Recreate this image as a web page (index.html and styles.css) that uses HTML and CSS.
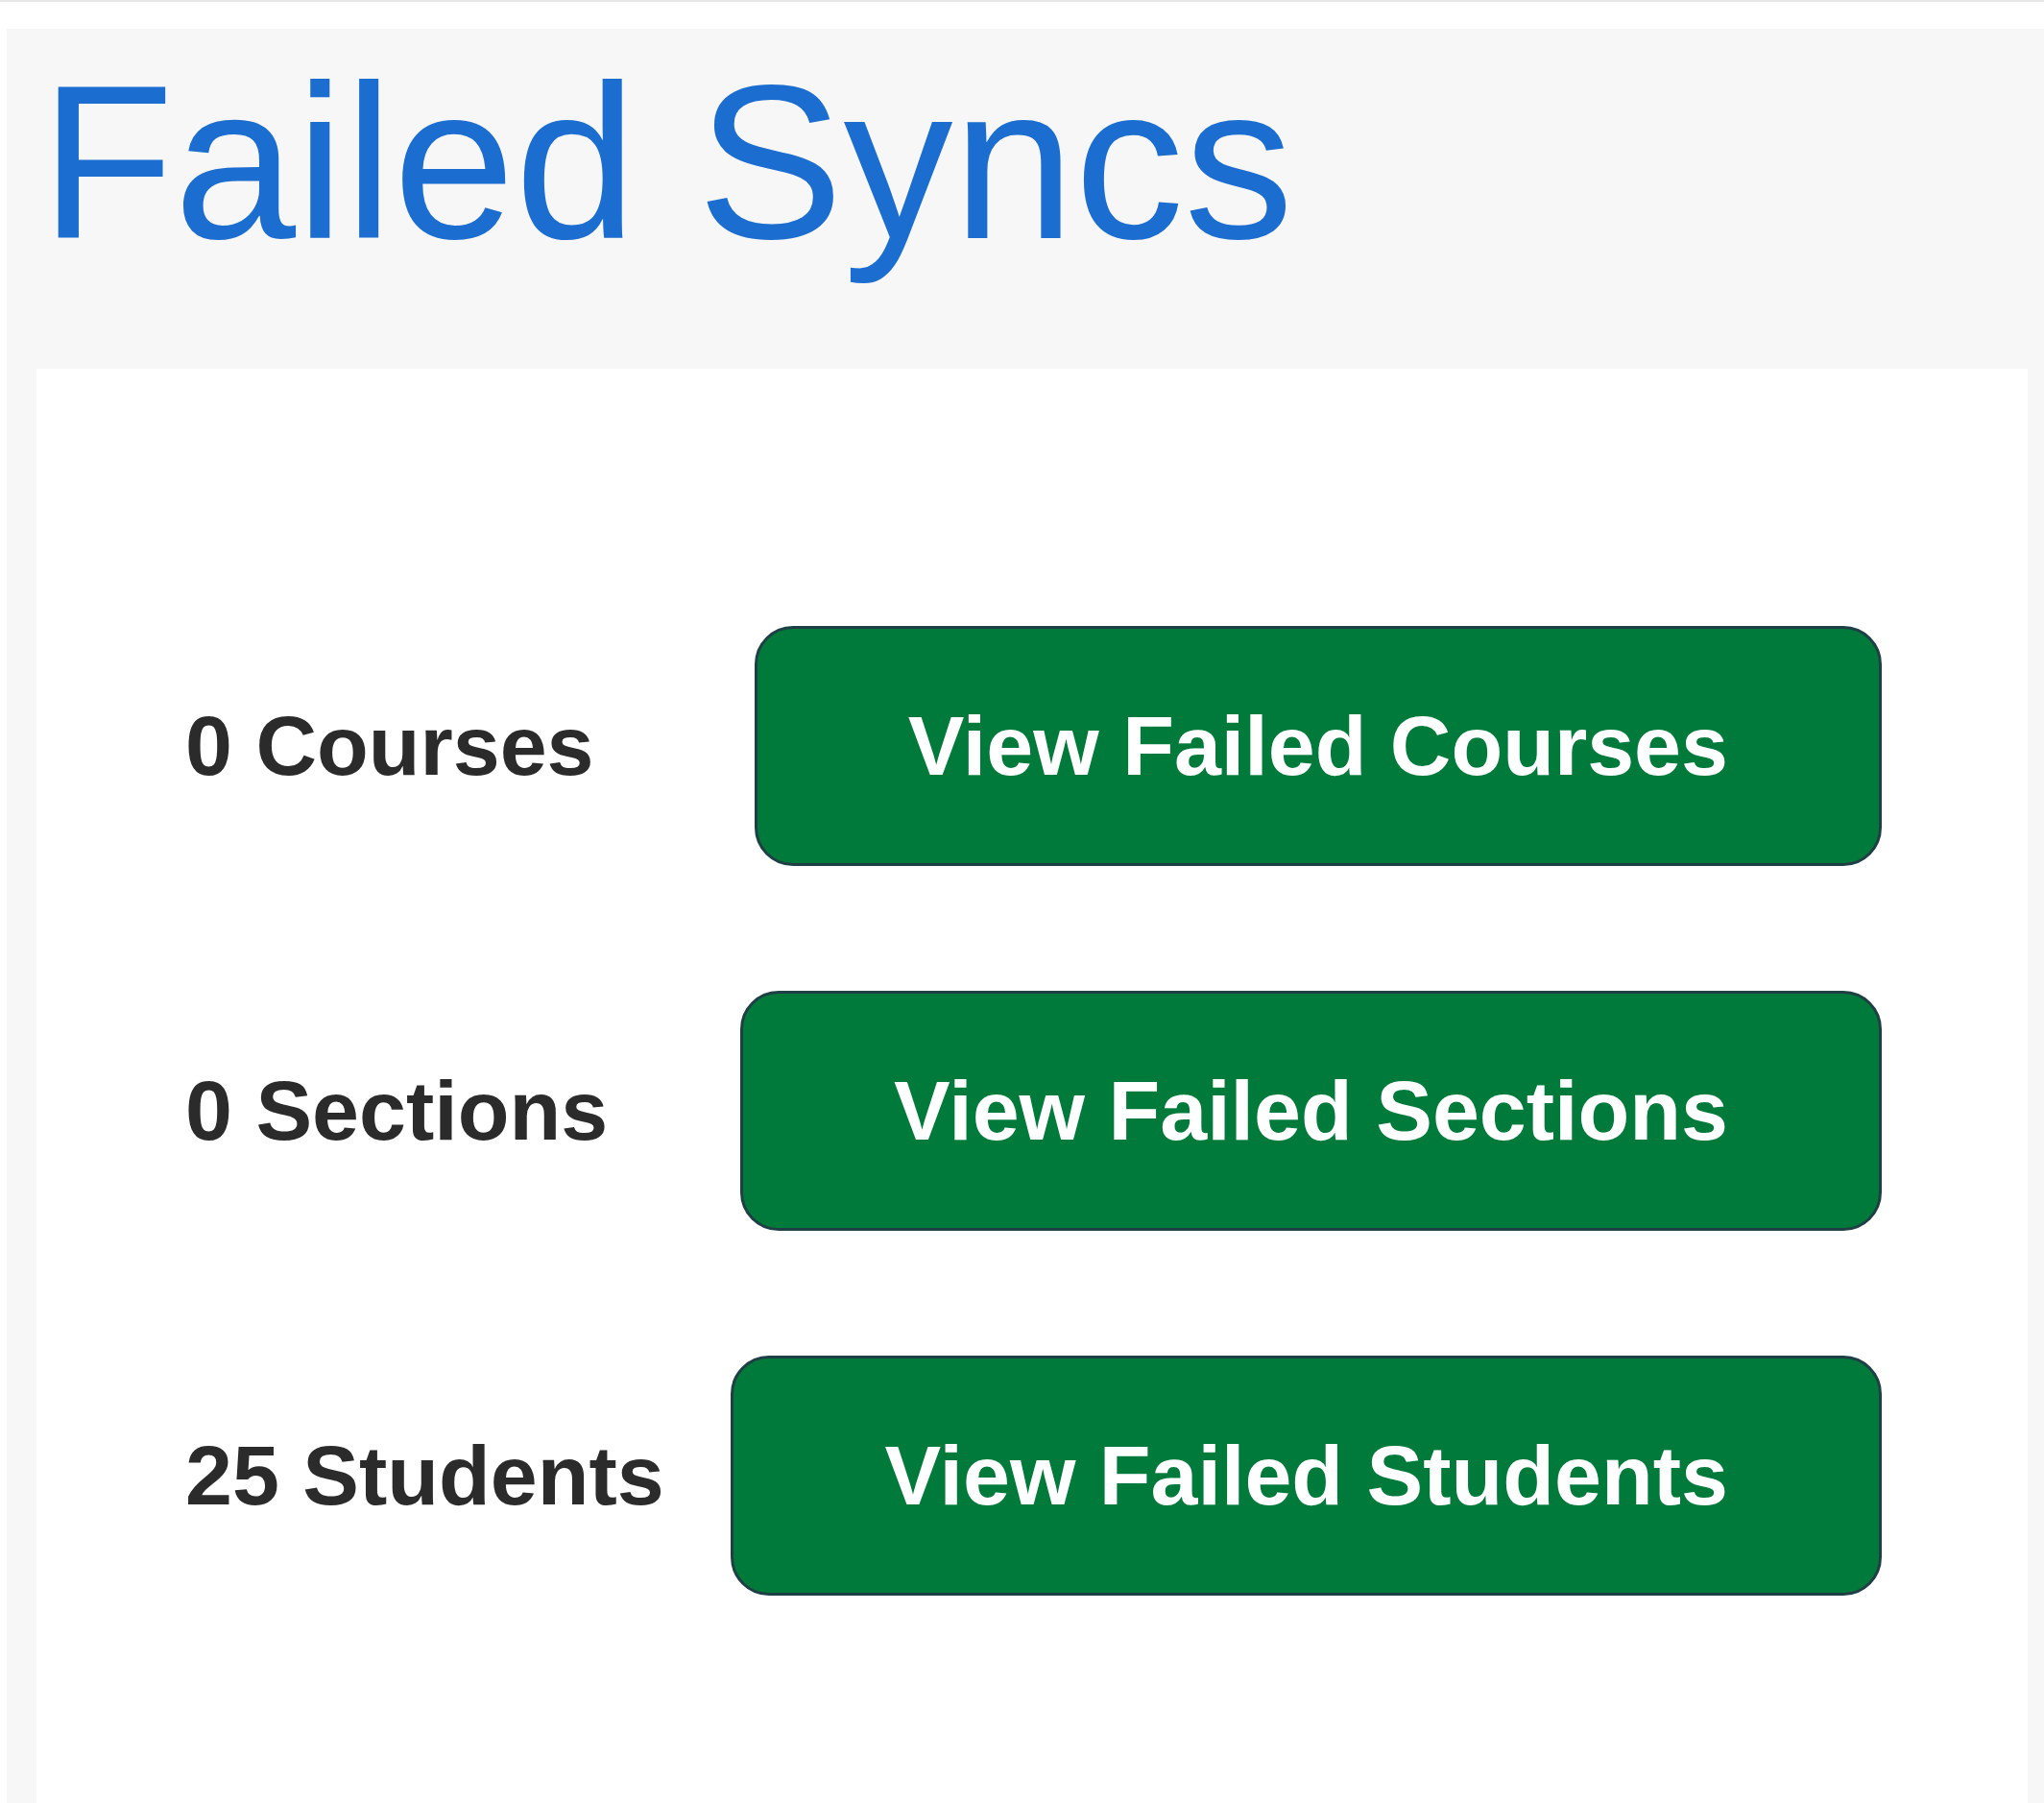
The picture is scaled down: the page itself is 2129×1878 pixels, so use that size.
FILE: index.html
```html
<!DOCTYPE html>
<html lang="en">
<head>
<meta charset="utf-8">
<title>Failed Syncs</title>
<link rel="stylesheet" href="styles.css">
</head>
<body>
  <section class="panel">
    <h1 class="panel-title">Failed Syncs</h1>
    <div class="card">
      <div class="sync-row">
        <span class="sync-count">0 Courses</span>
        <button class="sync-btn" type="button">View Failed Courses</button>
      </div>
      <div class="sync-row">
        <span class="sync-count">0 Sections</span>
        <button class="sync-btn" type="button">View Failed Sections</button>
      </div>
      <div class="sync-row">
        <span class="sync-count">25 Students</span>
        <button class="sync-btn" type="button">View Failed Students</button>
      </div>
    </div>
  </section>
</body>
</html>
```

FILE: styles.css
```css
html, body {
  margin: 0;
  padding: 0;
  background: #ffffff;
  font-family: "Liberation Sans", Arial, sans-serif;
}

body {
  border-top: 2px solid #e7e7e7;
  height: 1878px;
  box-sizing: border-box;
  overflow: hidden;
}

.panel {
  margin: 28px 0 0 7px;
  padding: 9px 17px 0 31px;
  background: #f7f7f7;
}

.panel-title {
  margin: 0 0 0 4px;
  font-size: 228px;
  font-weight: 400;
  line-height: normal;
  color: #1c6dd0;
  height: 345px;
}

.card {
  background: #ffffff;
  padding: 268px 152px 0 155px;
  min-height: 1494px;
  box-sizing: border-box;
  display: flex;
  flex-direction: column;
  gap: 130px;
}

.sync-row {
  display: flex;
  justify-content: space-between;
  align-items: center;
}

.sync-count {
  font-size: 88px;
  font-weight: 700;
  color: #2b2b2b;
}

.sync-btn {
  height: 250px;
  box-sizing: border-box;
  padding: 0 157px;
  border: 3px solid #1e4045;
  border-radius: 40px;
  background: #007a3a;
  color: #ffffff;
  font-family: "Liberation Sans", Arial, sans-serif;
  font-size: 88px;
  font-weight: 700;
  line-height: 1;
  cursor: pointer;
}
```
